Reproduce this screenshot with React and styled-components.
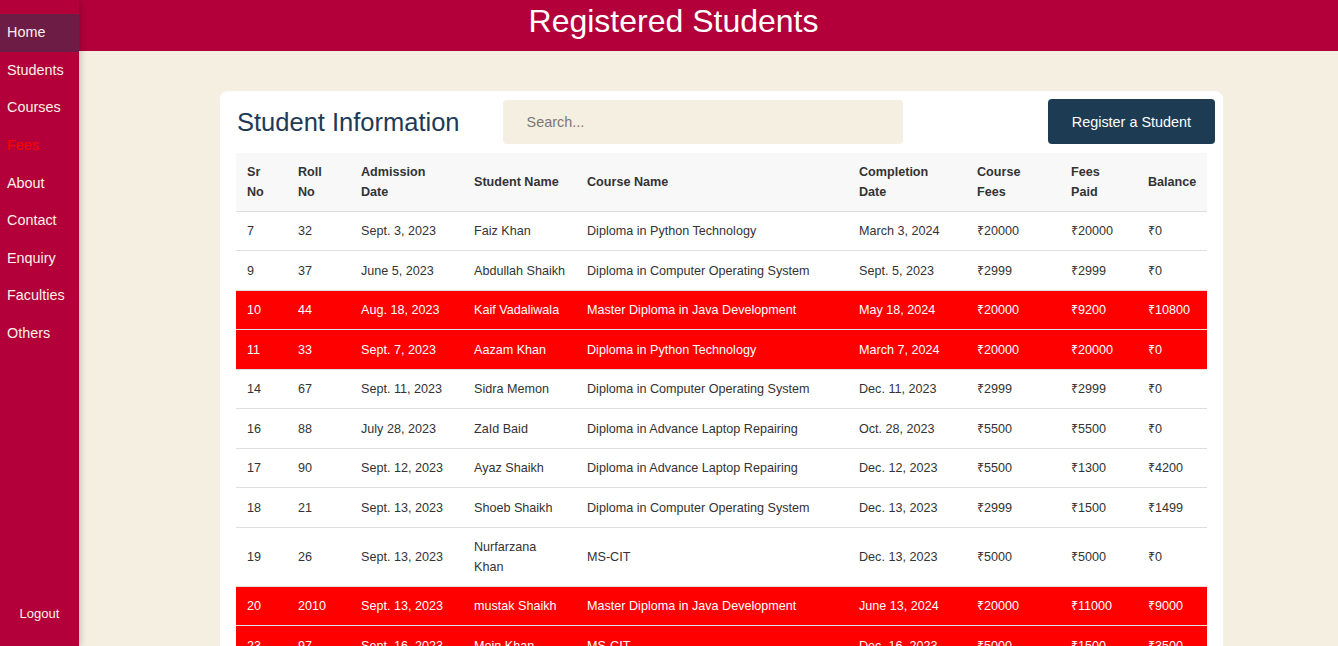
import React from 'react';
import styled, { createGlobalStyle } from 'styled-components';

const GlobalStyle = createGlobalStyle`
  * { box-sizing: border-box; }
  body {
    margin: 0;
    font-family: "Liberation Sans", Arial, sans-serif;
    background-color: #f5efe2;
    color: #333;
  }
`;

const Layout = styled.div`
  display: flex;
  min-height: 100vh;
`;

const Sidebar = styled.nav`
  position: sticky;
  top: 0;
  flex: 0 0 79px;
  height: 100vh;
  background-color: #b3003a;
  display: flex;
  flex-direction: column;
  padding: 14px 0 25px;
  box-shadow: 2px 0 6px rgba(0, 0, 0, 0.18);
  z-index: 2;
`;

const NavItem = styled.a`
  display: flex;
  align-items: center;
  height: 37.6px;
  padding: 0 7px 1px;
  font-size: 14.4px;
  text-decoration: none;
  color: ${({ $danger }) => ($danger ? '#ff0000' : '#f8f1e6')};
  background-color: ${({ $active }) => ($active ? '#6d1c45' : 'transparent')};
`;

const Logout = styled.a`
  margin-top: auto;
  text-align: center;
  font-size: 13px;
  color: #f8f1e6;
  text-decoration: none;
`;

const Main = styled.main`
  flex: 1;
  min-width: 0;
`;

const Header = styled.header`
  height: 51px;
  background-color: #b3003a;
  color: #fff;
  text-align: center;
  padding: 3px 70px 0 0;
`;

const HeaderTitle = styled.h1`
  margin: 0;
  font-size: 32px;
  font-weight: 400;
  line-height: 36px;
`;

const Content = styled.div`
  padding: 40px 115px 0 141px;
`;

const Card = styled.section`
  width: 1003px;
  background-color: #fff;
  border-radius: 8px;
  padding-bottom: 16px;
`;

const Toolbar = styled.div`
  display: flex;
  align-items: center;
  padding: 8px 8px 9px 17px;
`;

const Title = styled.h2`
  margin: 0;
  padding-top: 2px;
  font-size: 25.5px;
  font-weight: 400;
  color: #1e3a55;
`;

const Search = styled.input`
  margin-left: 43px;
  width: 400px;
  height: 44px;
  border: none;
  border-radius: 4px;
  background-color: #f5efe2;
  padding: 0 24px;
  font-family: inherit;
  font-size: 14.4px;
  color: #333;
  outline: none;

  &::placeholder {
    color: #777;
  }
`;

const RegisterButton = styled.button`
  margin-left: auto;
  height: 45px;
  padding: 0 24px;
  border: none;
  border-radius: 4px;
  background-color: #1e3b54;
  color: #fff;
  font-family: inherit;
  font-size: 14.4px;
  cursor: pointer;
`;

const TableWrap = styled.div`
  padding: 0 16px;
`;

const Table = styled.table`
  width: 100%;
  border-collapse: collapse;
  table-layout: fixed;
  font-size: 12.6px;
`;

const HeadCell = styled.th`
  text-align: left;
  font-weight: 700;
  color: #333;
  background-color: #f8f8f8;
  padding: 10px 8px 9px 11px;
  line-height: 19.5px;
  border-bottom: 1px solid #dcdcdc;
`;

const Row = styled.tr`
  background-color: ${({ $due }) => ($due ? '#ff0000' : '#fff')};
  color: ${({ $due }) => ($due ? '#fff' : '#333')};
`;

const Cell = styled.td`
  padding: 10.2px 8px 8.8px 11px;
  line-height: 19.5px;
  border-bottom: 1px solid #dedede;
  vertical-align: middle;
`;

const columns = [
  { label: ['Sr', 'No'], width: 51 },
  { label: ['Roll', 'No'], width: 63 },
  { label: ['Admission', 'Date'], width: 113 },
  { label: ['Student Name'], width: 113 },
  { label: ['Course Name'], width: 272 },
  { label: ['Completion', 'Date'], width: 118 },
  { label: ['Course', 'Fees'], width: 94 },
  { label: ['Fees', 'Paid'], width: 77 },
  { label: ['Balance'], width: 70 },
];

const students = [
  [7, 32, 'Sept. 3, 2023', 'Faiz Khan', 'Diploma in Python Technology', 'March 3, 2024', 20000, 20000, 0],
  [9, 37, 'June 5, 2023', 'Abdullah Shaikh', 'Diploma in Computer Operating System', 'Sept. 5, 2023', 2999, 2999, 0],
  [10, 44, 'Aug. 18, 2023', 'Kaif Vadaliwala', 'Master Diploma in Java Development', 'May 18, 2024', 20000, 9200, 10800, true],
  [11, 33, 'Sept. 7, 2023', 'Aazam Khan', 'Diploma in Python Technology', 'March 7, 2024', 20000, 20000, 0, true],
  [14, 67, 'Sept. 11, 2023', 'Sidra Memon', 'Diploma in Computer Operating System', 'Dec. 11, 2023', 2999, 2999, 0],
  [16, 88, 'July 28, 2023', 'ZaId Baid', 'Diploma in Advance Laptop Repairing', 'Oct. 28, 2023', 5500, 5500, 0],
  [17, 90, 'Sept. 12, 2023', 'Ayaz Shaikh', 'Diploma in Advance Laptop Repairing', 'Dec. 12, 2023', 5500, 1300, 4200],
  [18, 21, 'Sept. 13, 2023', 'Shoeb Shaikh', 'Diploma in Computer Operating System', 'Dec. 13, 2023', 2999, 1500, 1499],
  [19, 26, 'Sept. 13, 2023', 'Nurfarzana Khan', 'MS-CIT', 'Dec. 13, 2023', 5000, 5000, 0],
  [20, 2010, 'Sept. 13, 2023', 'mustak Shaikh', 'Master Diploma in Java Development', 'June 13, 2024', 20000, 11000, 9000, true],
  [23, 97, 'Sept. 16, 2023', 'Moin Khan', 'MS-CIT', 'Dec. 16, 2023', 5000, 1500, 3500, true],
  [24, 45, 'Sept. 18, 2023', 'Sameer Ansari', 'Diploma in Computer Operating System', 'Dec. 18, 2023', 2999, 2999, 0],
];

const navLinks = ['Home', 'Students', 'Courses', 'Fees', 'About', 'Contact', 'Enquiry', 'Faculties', 'Others'];

const App = () => {
  return (
    <Layout>
      <GlobalStyle />
      <Sidebar>
        {navLinks.map((name) => (
          <NavItem key={name} href="#" $active={name === 'Home'} $danger={name === 'Fees'}>
            {name}
          </NavItem>
        ))}
        <Logout href="#">Logout</Logout>
      </Sidebar>

      <Main>
        <Header>
          <HeaderTitle>Registered Students</HeaderTitle>
        </Header>

        <Content>
          <Card>
            <Toolbar>
              <Title>Student Information</Title>
              <Search type="text" placeholder="Search..." />
              <RegisterButton>Register a Student</RegisterButton>
            </Toolbar>

            <TableWrap>
              <Table>
                <colgroup>
                  {columns.map((col, i) => (
                    <col key={i} style={{ width: col.width }} />
                  ))}
                </colgroup>
                <thead>
                  <tr>
                    {columns.map((col, i) => (
                      <HeadCell key={i}>
                        {col.label.map((part, j) => (
                          <React.Fragment key={j}>
                            {j > 0 && <br />}
                            {part}
                          </React.Fragment>
                        ))}
                      </HeadCell>
                    ))}
                  </tr>
                </thead>
                <tbody>
                  {students.map((s) => (
                    <Row key={s[0]} $due={s[9]}>
                      <Cell>{s[0]}</Cell>
                      <Cell>{s[1]}</Cell>
                      <Cell>{s[2]}</Cell>
                      <Cell>{s[3]}</Cell>
                      <Cell>{s[4]}</Cell>
                      <Cell>{s[5]}</Cell>
                      <Cell>₹{s[6]}</Cell>
                      <Cell>₹{s[7]}</Cell>
                      <Cell>₹{s[8]}</Cell>
                    </Row>
                  ))}
                </tbody>
              </Table>
            </TableWrap>
          </Card>
        </Content>
      </Main>
    </Layout>
  );
};

export default App;
